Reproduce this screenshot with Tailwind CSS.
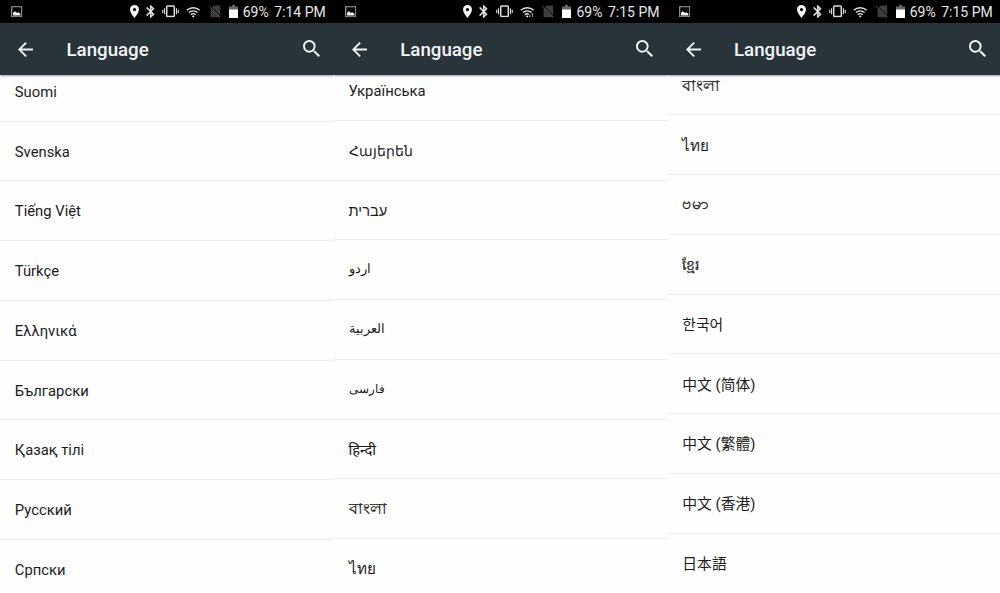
<!DOCTYPE html>
<html lang="en">
<head>
  <meta charset="UTF-8" />
  <meta name="viewport" content="width=device-width, initial-scale=1.0"/>
  <title>Language</title>
  <script src="https://cdn.jsdelivr.net/npm/@tailwindcss/browser@4"></script>
</head>
<body class="h-screen overflow-hidden bg-[#fefefe] font-[Roboto,'Noto_Sans','Noto_Sans_CJK_SC',sans-serif]">

  <!-- icons shared by the three screens -->
  <svg class="hidden">
    <symbol id="image" viewBox="0 0 12 12"><path d="M.75.75h10.5v10.5H.75z" fill="none" stroke="#a5a5a5" stroke-width="1.2"/><path d="M2.2 9.8V7l1.9-1.5L6.3 7.3l1.2-.8 2.3 1.7v1.6z" fill="#fff"/></symbol>
    <symbol id="pin" viewBox="5 2 14 20"><path d="M12 2C8.13 2 5 5.13 5 9c0 5.25 7 13 7 13s7-7.75 7-13c0-3.87-3.13-7-7-7zm0 9.5a2.5 2.5 0 1 1 0-5 2.5 2.5 0 0 1 0 5z" fill="#f4f4f4"/></symbol>
    <symbol id="bluetooth" viewBox="4.5 2 15 20"><path d="M14.88 16.29 13 18.17v-3.76zM13 5.83l1.88 1.88L13 9.59zm4.71 1.88L12 2h-1v7.59L6.41 5 5 6.41 10.59 12 5 17.59 6.41 19 11 14.41V22h1l5.71-5.71-4.3-4.29z" fill="#ececec" stroke="#ececec" stroke-width=".5"/></symbol>
    <symbol id="vibrate" viewBox="0 0 18 13"><g fill="none" stroke="#dcdcdc"><rect x="5" y=".9" width="8" height="11.2" rx=".8" stroke-width="1.6"/><path d="M2.7 3.3v6.4M15.3 3.3v6.4M.8 4.8v3.6M17.2 4.8v3.6" stroke-width="1.2"/></g></symbol>
    <symbol id="wifi" viewBox="0 0 15 12"><g fill="none" stroke="#e6e6e6" stroke-width="1.4"><path d="M.9 4.2a9.6 9.6 0 0 1 13.2 0M3 6.6a6.6 6.6 0 0 1 9 0M5 8.8a3.7 3.7 0 0 1 5 0"/></g><path d="M6 10.1q1.5-1.1 3 0L7.5 11.7z" fill="#fff"/></symbol>
    <symbol id="wifi-busy" viewBox="0 0 15 12"><g fill="none" stroke="#e6e6e6" stroke-width="1.4"><path d="M.9 4.2a9.6 9.6 0 0 1 13.2 0M3 6.6a6.6 6.6 0 0 1 9 0M5 8.8a3.7 3.7 0 0 1 4.2-.5"/></g><path d="M6 10.1q1.2-1 2.4-.2v1.2l-.9.6zM10 8.3v2h-.9l1.5 1.6V8.3zM12.6 11.4V8.8h-.8l1.4-1.7v4.3z" fill="#fff"/></symbol>
    <symbol id="no-sim" viewBox="0 0 12 13"><path d="M4.8.6h6.4v11.6H1.6V3.8z" fill="#3d3d3d"/><path d="M1 .6 12 11.7" stroke="#000" stroke-width="1"/><path d="M.4 1.2 11.4 12.4" stroke="#555" stroke-width="1"/></symbol>
    <symbol id="battery" viewBox="0 0 9 13"><path d="M3 0h3v1.4h3V5H0V1.4h3z" fill="#666"/><path d="M0 4.5h9V13H0z" fill="#fff"/></symbol>
    <symbol id="back" viewBox="4 4 16 16"><path d="M20 11H7.83l5.59-5.59L12 4l-8 8 8 8 1.41-1.41L7.83 13H20z" fill="#f1f5f7"/></symbol>
    <symbol id="search" viewBox="3 3 17.5 17.5"><path d="M15.5 14h-.79l-.28-.27A6.47 6.47 0 0 0 16 9.5 6.5 6.5 0 1 0 9.5 16c1.61 0 3.09-.59 4.23-1.57l.27.28v.79l5 4.99L20.49 19zm-6 0a4.5 4.5 0 1 1 0-9 4.5 4.5 0 0 1 0 9z" fill="#f1f5f7"/></symbol>
  </svg>

  <main id="screens" class="flex h-full w-[1002px]"></main>

  <script>
    const screens = [
      {
        time: "7:14 PM", wifi: "wifi", offset: "-mt-[13.2px]", edge: "pr-[8px]", searchEdge: "pr-[14px]",
        languages: ["Suomi", "Svenska", "Tiếng Việt", "Türkçe", "Ελληνικά", "Български", "Қазақ тілі", "Русский", "Српски"]
      },
      {
        time: "7:15 PM", wifi: "wifi-busy", offset: "-mt-[13.9px]", edge: "pr-[8px]", searchEdge: "pr-[14.5px]",
        languages: ["Українська", "Հայերեն", "עברית", "اردو", "العربية", "فارسی", "हिन्दी", "বাংলা", "ไทย"]
      },
      {
        time: "7:15 PM", wifi: "wifi", offset: "-mt-[19.3px]", edge: "pr-[8.5px]", searchEdge: "pr-[15.5px]",
        languages: ["বাংলা", "ไทย", "ဗမာ", "ខ្មែរ", "한국어", "中文 (简体)", "中文 (繁體)", "中文 (香港)", "日本語"]
      }
    ];

    // some fallback scripts run wider or lighter than Roboto
    const scriptStyle = {
      "Հայերեն": "text-[13.6px]",
      "עברית": "text-[14.6px]",
      "اردو": "text-[13px] pb-[2px]",
      "العربية": "text-[13px] pb-[3px]",
      "فارسی": "text-[12px] pb-[2px]",
      "বাংলা": "text-[15.5px] [-webkit-text-stroke:0.2px]",
      "ไทย": "text-[15.2px]",
      "ဗမာ": "text-[16px] pb-[3px] [-webkit-text-stroke:0.3px]",
      "ខ្មែរ": "text-[14px] [-webkit-text-stroke:0.15px]",
      "हिन्दी": "text-[14.6px] [-webkit-text-stroke:0.1px]"
    };

    const icon = (name, size) => `<svg class="${size} shrink-0"><use href="#${name}"/></svg>`;

    document.getElementById("screens").innerHTML = screens.map(s => `
      <section class="flex h-full w-[333.75px] shrink-0 flex-col overflow-hidden">
        <div class="flex h-[23px] shrink-0 items-center bg-black pl-[11px] ${s.edge}">
          ${icon("image", "w-[11.5px] h-[11.5px]")}
          <div class="ml-auto flex items-center gap-2">
            ${icon("pin", "w-[9px] h-[13px]")}
            ${icon("bluetooth", "w-[9.5px] h-[13px] -ml-px")}
            ${icon("vibrate", "w-[17px] h-[12.5px] -ml-px")}
            ${icon(s.wifi, "w-[14.5px] h-[12px] -ml-px")}
            ${icon("no-sim", "w-[12px] h-[13px]")}
            ${icon("battery", "w-[9px] h-[13px]")}
          </div>
          <div class="ml-[5px] flex gap-[5.5px] pt-px text-[14px] leading-5 text-[#e8e8e8]">
            <span>69%</span>
            <span>${s.time}</span>
          </div>
        </div>
        <header class="z-10 flex h-[52px] shrink-0 items-center bg-[#29333a] pl-[18.3px] ${s.searchEdge} shadow-[0_1px_2px_rgba(0,0,0,0.4)]">
          ${icon("back", "w-[15px] h-[15px]")}
          <h1 class="ml-[33.2px] pt-0.5 text-[18.7px] font-medium leading-6 text-[#f1f5f7]">Language</h1>
          ${icon("search", "ml-auto mb-px w-[17px] h-[17px]")}
        </header>
        <div class="min-h-0 flex-1 overflow-hidden">
          <ul class="${s.offset}">
            ${s.languages.map(name => `
              <li class="flex h-[59.75px] items-center border-b border-[#eeeeee] pl-[14.8px] pt-[1.5px] leading-5 text-[#1c1c1c] last:border-transparent ${scriptStyle[name] || "text-[14.8px]"}">${name}</li>
            `).join("")}
          </ul>
        </div>
      </section>
    `).join("");
  </script>
</body>
</html>
